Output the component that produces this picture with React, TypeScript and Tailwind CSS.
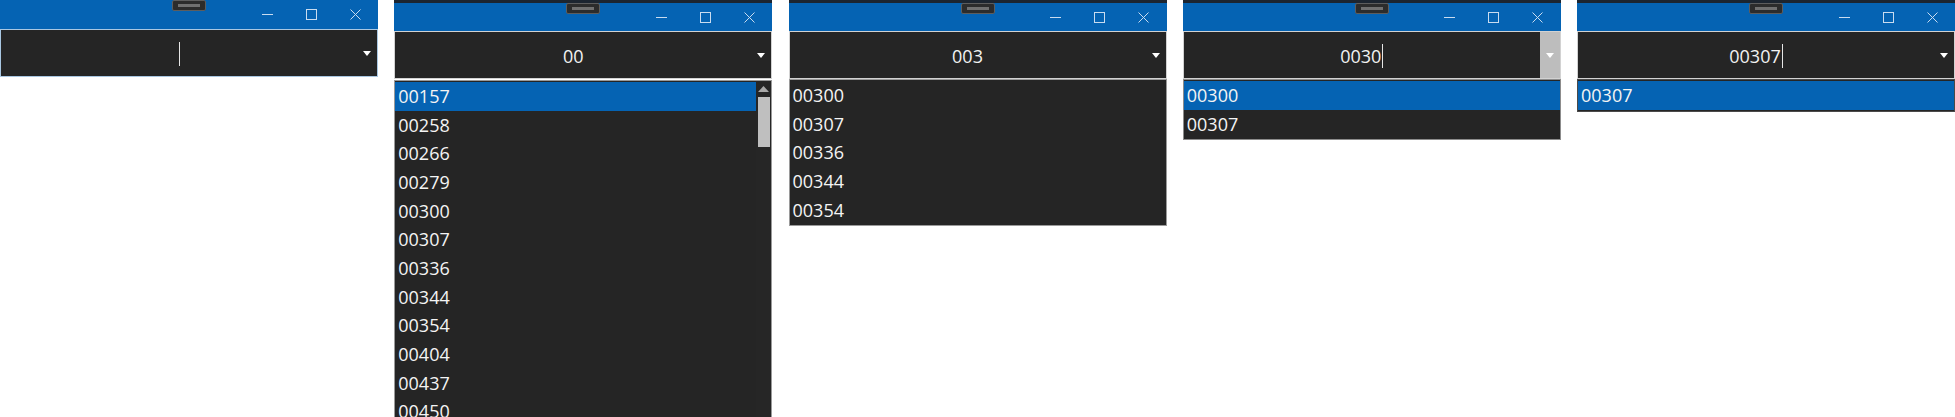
import type { ReactNode } from "react";

const FONT = { fontFamily: '"Open Sans", "Noto Sans", sans-serif' };

const ALL_ITEMS = [
  "00157",
  "00258",
  "00266",
  "00279",
  "00300",
  "00307",
  "00336",
  "00344",
  "00354",
  "00404",
  "00437",
  "00450",
  "00468",
];

function WinIcon({ kind }: { kind: "min" | "max" | "close" }) {
  return (
    <svg width="11" height="11" viewBox="0 0 11 11" fill="none" stroke="#c9dcf0" strokeWidth="1">
      {kind === "min" && <path d="M0 5.5h11" />}
      {kind === "max" && <rect x="0.5" y="0.5" width="10" height="10" />}
      {kind === "close" && <path d="M0.5 0.5l10 10M10.5 0.5l-10 10" />}
    </svg>
  );
}

function TitleBar({ strip }: { strip: boolean }) {
  return (
    <>
      {strip ? <div className="h-[3px] bg-[#1c2530]" /> : null}
      <div
        className={
          strip
            ? "relative flex h-[28px] items-center justify-end bg-[#0563b3] pr-[1px]"
            : "relative flex h-[29px] items-center justify-end bg-[#0563b3] pr-[1px]"
        }
      >
        <div className="absolute left-1/2 top-0 flex h-[11px] w-[34px] -translate-x-1/2 items-center justify-center rounded-[2px] border border-[#5d5d5d] bg-[#2c2c2c]">
          <div className="h-[3px] w-[22px] bg-[#707070]" />
        </div>
        <div className="flex h-full w-[44px] items-center justify-center">
          <WinIcon kind="min" />
        </div>
        <div className="flex h-full w-[44px] items-center justify-center">
          <WinIcon kind="max" />
        </div>
        <div className="flex h-full w-[44px] items-center justify-center">
          <WinIcon kind="close" />
        </div>
      </div>
    </>
  );
}

function Arrow({ color = "#ffffff" }: { color?: string }) {
  return (
    <svg width="8" height="5" viewBox="0 0 8 5">
      <path d="M0 0h8L4 5z" fill={color} />
    </svg>
  );
}

function Caret() {
  return <span className="ml-[1px] inline-block h-[24px] w-[1px] bg-[#e6e6e6] align-middle" />;
}

function Combo({
  text,
  caret,
  focused,
  pressed,
}: {
  text: string;
  caret?: boolean;
  focused?: boolean;
  pressed?: boolean;
}) {
  return (
    <div
      className={
        focused
          ? "flex h-[48px] border border-[#a9c7e2] bg-[#252525]"
          : "flex h-[48px] border border-[#d2d2d2] bg-[#252525]"
      }
    >
      <div className="flex flex-1 items-center justify-center pt-[2px] text-[18px] text-[#f2f2f2]">
        <span className="leading-none">{text}</span>
        {caret ? <Caret /> : null}
      </div>
      <div
        className={
          pressed
            ? "flex w-[20px] items-center justify-center bg-[#bdbdbd]"
            : "flex w-[20px] items-center justify-center"
        }
      >
        <Arrow />
      </div>
    </div>
  );
}

function Item({ label, selected }: { label: string; selected?: boolean }) {
  return (
    <div
      className={
        selected
          ? "flex h-[28.7px] items-center bg-[#0563b3] pl-[3px] text-[18px] text-[#f4f4f4]"
          : "flex h-[28.7px] items-center pl-[3px] text-[18px] text-[#f4f4f4]"
      }
    >
      {label}
    </div>
  );
}

function List({
  items,
  selected,
  border,
  children,
}: {
  items: string[];
  selected?: string;
  border: string;
  children?: ReactNode;
}) {
  return (
    <div className={`flex border ${border} bg-[#252525]`}>
      <div className="flex-1 py-[1px]">
        {items.map((it) => (
          <Item key={it} label={it} selected={it === selected} />
        ))}
      </div>
      {children}
    </div>
  );
}

function Scrollbar() {
  return (
    <div className="flex w-[15px] flex-col items-center bg-[#262626] pt-[5px]">
      <svg width="11" height="6" viewBox="0 0 11 6">
        <path d="M0 6h11L5.5 0z" fill="#a8a8a8" />
      </svg>
      <div className="mt-[5px] h-[50px] w-[12px] bg-[#bfbfbf]" />
      <div className="flex-1" />
      <svg width="11" height="6" viewBox="0 0 11 6" className="mb-[6px]">
        <path d="M0 0h11L5.5 6z" fill="#a8a8a8" />
      </svg>
    </div>
  );
}

function Panel({ strip, children }: { strip: boolean; children: ReactNode }) {
  return (
    <div className="flex w-[378px] shrink-0 flex-col">
      <TitleBar strip={strip} />
      {children}
    </div>
  );
}

export default function App() {
  return (
    <div className="h-[417px] overflow-hidden bg-white" style={FONT}>
      <div className="flex items-start gap-[16.25px]">
        <Panel strip={false}>
          <Combo text="" caret focused />
        </Panel>

        <Panel strip>
          <Combo text="00" />
          <div className="h-[340px] overflow-hidden pt-[1px]">
            <List items={ALL_ITEMS} selected="00157" border="border-[#9a9a9a]">
              <Scrollbar />
            </List>
          </div>
        </Panel>

        <Panel strip>
          <Combo text="003" />
          <List items={["00300", "00307", "00336", "00344", "00354"]} border="border-[#9a9a9a]" />
        </Panel>

        <Panel strip>
          <Combo text="0030" caret pressed />
          <List items={["00300", "00307"]} selected="00300" border="border-[#8c8c8c]" />
        </Panel>

        <Panel strip>
          <Combo text="00307" caret />
          <List items={["00307"]} selected="00307" border="border-[#4a4a4a]" />
        </Panel>
      </div>
    </div>
  );
}
